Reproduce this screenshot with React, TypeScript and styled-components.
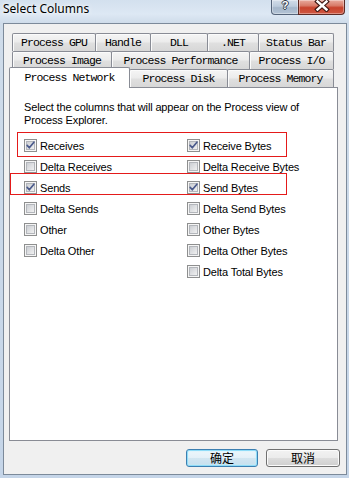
import React from 'react';
import styled, { createGlobalStyle } from 'styled-components';

const Global = createGlobalStyle`
  html, body { margin: 0; padding: 0; }
  body { width: 349px; height: 478px; overflow: hidden; background: #cbd9e9; }
`;

const Frame = styled.div`
  width: 349px;
  height: 478px;
  box-sizing: border-box;
  display: flex;
  flex-direction: column;
  padding: 0 2px 3px 3px;
  background: linear-gradient(180deg, #d3e0ee 0px, #dde8f4 14px, #cfdcea 23px, #c5d5e8 100%);
  font-family: 'Liberation Sans', Arial, sans-serif;
`;

const TitleBar = styled.div`
  height: 23px;
  display: flex;
  align-items: flex-start;
  flex-shrink: 0;
`;

const Title = styled.div`
  flex: 1;
  padding-top: 1px;
  font: 12px/16px 'Noto Sans', 'Open Sans', sans-serif;
  color: #000;
  text-shadow: 0 0 6px rgba(255, 255, 255, 0.95), 0 0 3px rgba(255, 255, 255, 0.9);
`;

const CaptionButtons = styled.div`
  display: flex;
  margin-right: 2px;
`;

const CaptionButton = styled.div<{ $close?: boolean }>`
  box-sizing: border-box;
  height: 15px;
  width: ${(p) => (p.$close ? 47 : 28)}px;
  margin-left: ${(p) => (p.$close ? -1 : 0)}px;
  display: flex;
  align-items: flex-start;
  justify-content: center;
  border: 1px solid ${(p) => (p.$close ? '#5e2a24' : '#55647a')};
  border-top: none;
  border-radius: ${(p) => (p.$close ? '0 0 4px 0' : '0 0 0 4px')};
  background: ${(p) =>
    p.$close
      ? 'linear-gradient(180deg, #e9ab9e 0%, #d87b69 40%, #c8432d 55%, #cf5843 100%)'
      : 'linear-gradient(180deg, #d3dde9 0%, #bccbdc 45%, #a5b6ca 55%, #b4c4d6 100%)'};
  box-shadow: inset 0 0 0 1px rgba(255, 255, 255, 0.35);
`;

const HelpGlyph = styled.span`
  font: bold 11px/12px 'Liberation Sans', Arial, sans-serif;
  color: #fff;
  margin-top: -1px;
  text-shadow: -1px 0 #2c3644, 1px 0 #2c3644, 0 -1px #2c3644, 0 1px #2c3644;
`;

const Client = styled.div`
  flex: 1;
  display: flex;
  flex-direction: column;
  border: 1px solid #7c8a9a;
  background: #f0f0f0;
  padding-top: 9px;
`;

const TabControl = styled.div`
  width: 329px;
  margin-left: 5px;
  display: flex;
  flex-direction: column;
`;

const TabRow = styled.div`
  display: flex;
  align-items: flex-end;
  height: 18px;
`;

const Tab = styled.div<{ $w: number; $ml: number; $sel?: boolean }>`
  box-sizing: border-box;
  width: ${(p) => p.$w}px;
  height: ${(p) => (p.$sel ? 21 : 18)}px;
  margin-left: ${(p) => p.$ml}px;
  margin-bottom: ${(p) => (p.$sel ? -1 : 0)}px;
  position: relative;
  z-index: ${(p) => (p.$sel ? 2 : 0)};
  border: 1px solid #898c95;
  border-bottom: none;
  border-radius: 2px 2px 0 0;
  background: ${(p) =>
    p.$sel
      ? '#ffffff'
      : 'linear-gradient(180deg, #f5f5f5 0%, #ececec 45%, #dfdfdf 55%, #d7d7d7 100%)'};
  box-shadow: ${(p) => (p.$sel ? 'none' : 'inset 1px 1px 0 #fbfbfb')};
  display: flex;
  justify-content: center;
  align-items: ${(p) => (p.$sel ? 'flex-start' : 'center')};
  padding-top: ${(p) => (p.$sel ? 3 : 0)}px;
  font: 11.5px/14px 'Liberation Mono', 'DejaVu Sans Mono', monospace;
  letter-spacing: -0.9px;
  color: #000;
  white-space: pre;
`;

const Panel = styled.div`
  position: relative;
  box-sizing: border-box;
  height: 354px;
  border: 1px solid #898c95;
  background: #fff;
  padding: 13px 0 0 14px;
`;

const Intro = styled.p`
  margin: 0;
  font-size: 11px;
  line-height: 13px;
  letter-spacing: -0.15px;
  color: #000;
`;

const Grid = styled.div`
  margin-top: 8px;
  display: grid;
  grid-template-columns: 163px auto;
  grid-auto-rows: 21px;
`;

const Item = styled.label`
  display: flex;
  align-items: center;
  gap: 3px;
  font-size: 11px;
  letter-spacing: -0.15px;
  color: #000;
`;

const Mark = styled.div<{ $left: number; $top: number; $w: number; $h: number }>`
  position: absolute;
  box-sizing: border-box;
  left: ${(p) => p.$left}px;
  top: ${(p) => p.$top}px;
  width: ${(p) => p.$w}px;
  height: ${(p) => p.$h}px;
  border: 1.5px solid #e41a1a;
  pointer-events: none;
`;

const ButtonRow = styled.div`
  display: flex;
  justify-content: flex-end;
  gap: 8px;
  margin-top: 8px;
  padding-right: 6px;
`;

const DlgButton = styled.button<{ $w: number; $default?: boolean }>`
  box-sizing: border-box;
  width: ${(p) => p.$w}px;
  height: 18px;
  padding: 0;
  border: 1px solid ${(p) => (p.$default ? '#3c7fb1' : '#707070')};
  border-radius: 3px;
  background: ${(p) =>
    p.$default
      ? 'linear-gradient(180deg, #eef7fc 0%, #e3f0f8 50%, #d2e6f1 50%, #c6dfee 100%)'
      : 'linear-gradient(180deg, #f2f2f2 0%, #ebebeb 50%, #dddddd 50%, #cfcfcf 100%)'};
  box-shadow: ${(p) =>
    p.$default ? 'inset 0 0 0 1px #8fdcf8, inset 0 0 2px 1px #c6effc' : 'inset 0 0 0 1px #fbfbfb'};
  font: 12px/16px 'Noto Sans CJK SC', 'Noto Sans', sans-serif;
  color: #000;
`;

const CheckBox: React.FC<{ checked?: boolean }> = ({ checked }) => {
  const id = React.useId().replace(/:/g, '');
  return (
    <svg width="13" height="13" viewBox="0 0 13 13" style={{ flexShrink: 0 }}>
      <defs>
        <linearGradient id={`g${id}`} x1="0" y1="0" x2="1" y2="1">
          <stop offset="0" stopColor="#c9ccd1" />
          <stop offset="1" stopColor="#f3f3f3" />
        </linearGradient>
      </defs>
      <rect x="0.5" y="0.5" width="12" height="12" fill="#f5f5f5" stroke="#8e8f8f" />
      <rect x="2.5" y="2.5" width="8" height="8" fill={`url(#g${id})`} stroke="#b3b6bb" />
      {checked && (
        <path
          d="M3.2 6.4 L5.3 8.8 L9.9 3.2"
          fill="none"
          stroke="#4a5a8c"
          strokeWidth="1.7"
          strokeLinecap="round"
          strokeLinejoin="round"
        />
      )}
    </svg>
  );
};

type TabDef = { label: string; l: number; r: number; sel?: boolean };

const rows: TabDef[][] = [
  [
    { label: 'Process GPU', l: 12, r: 95 },
    { label: 'Handle', l: 95, r: 150 },
    { label: 'DLL', l: 150, r: 207 },
    { label: '.NET', l: 207, r: 258 },
    { label: 'Status Bar', l: 258, r: 333 },
  ],
  [
    { label: 'Process Image', l: 12, r: 111 },
    { label: 'Process Performance', l: 111, r: 249 },
    { label: 'Process I/O', l: 249, r: 333 },
  ],
  [
    { label: 'Process Network', l: 9, r: 129, sel: true },
    { label: 'Process Disk', l: 129, r: 227 },
    { label: 'Process Memory', l: 227, r: 333 },
  ],
];

const left: [string, boolean][] = [
  ['Receives', true],
  ['Delta Receives', false],
  ['Sends', true],
  ['Delta Sends', false],
  ['Other', false],
  ['Delta Other', false],
];
const right: [string, boolean][] = [
  ['Receive Bytes', true],
  ['Delta Receive Bytes', false],
  ['Send Bytes', true],
  ['Delta Send Bytes', false],
  ['Other Bytes', false],
  ['Delta Other Bytes', false],
  ['Delta Total Bytes', false],
];

export default function App() {
  const cells: React.ReactNode[] = [];
  for (let i = 0; i < right.length; i++) {
    const l = left[i];
    cells.push(
      l ? (
        <Item key={`l${i}`}>
          <CheckBox checked={l[1]} />
          {l[0]}
        </Item>
      ) : (
        <span key={`l${i}`} />
      )
    );
    const r = right[i];
    cells.push(
      <Item key={`r${i}`}>
        <CheckBox checked={r[1]} />
        {r[0]}
      </Item>
    );
  }

  return (
    <>
      <Global />
      <Frame>
        <TitleBar>
          <Title>Select Columns</Title>
          <CaptionButtons>
            <CaptionButton>
              <HelpGlyph>?</HelpGlyph>
            </CaptionButton>
            <CaptionButton $close>
              <svg width="16" height="12" viewBox="0 0 16 12">
                <path d="M3.5 1.5 L12.5 9.5 M12.5 1.5 L3.5 9.5" stroke="#3b1612" strokeWidth="4.6" strokeLinecap="square" />
                <path d="M3.5 1.5 L12.5 9.5 M12.5 1.5 L3.5 9.5" stroke="#ffffff" strokeWidth="2.4" strokeLinecap="square" />
              </svg>
            </CaptionButton>
          </CaptionButtons>
        </TitleBar>
        <Client>
          <TabControl>
            {rows.map((row, ri) => (
              <TabRow key={ri}>
                {row.map((t, ti) => (
                  <Tab key={t.label} $w={t.r - t.l + 1} $ml={ti === 0 ? t.l - 9 : -1} $sel={t.sel}>
                    {t.label}
                  </Tab>
                ))}
              </TabRow>
            ))}
            <Panel>
              <Intro>
                Select the columns that will appear on the Process view of
                <br />
                Process Explorer.
              </Intro>
              <Grid>{cells}</Grid>
              <Mark $left={7} $top={44} $w={270} $h={25} />
              <Mark $left={0} $top={85} $w={277} $h={22} />
            </Panel>
          </TabControl>
          <ButtonRow>
            <DlgButton $w={72} $default>
              确定
            </DlgButton>
            <DlgButton $w={74}>取消</DlgButton>
          </ButtonRow>
        </Client>
      </Frame>
    </>
  );
}
